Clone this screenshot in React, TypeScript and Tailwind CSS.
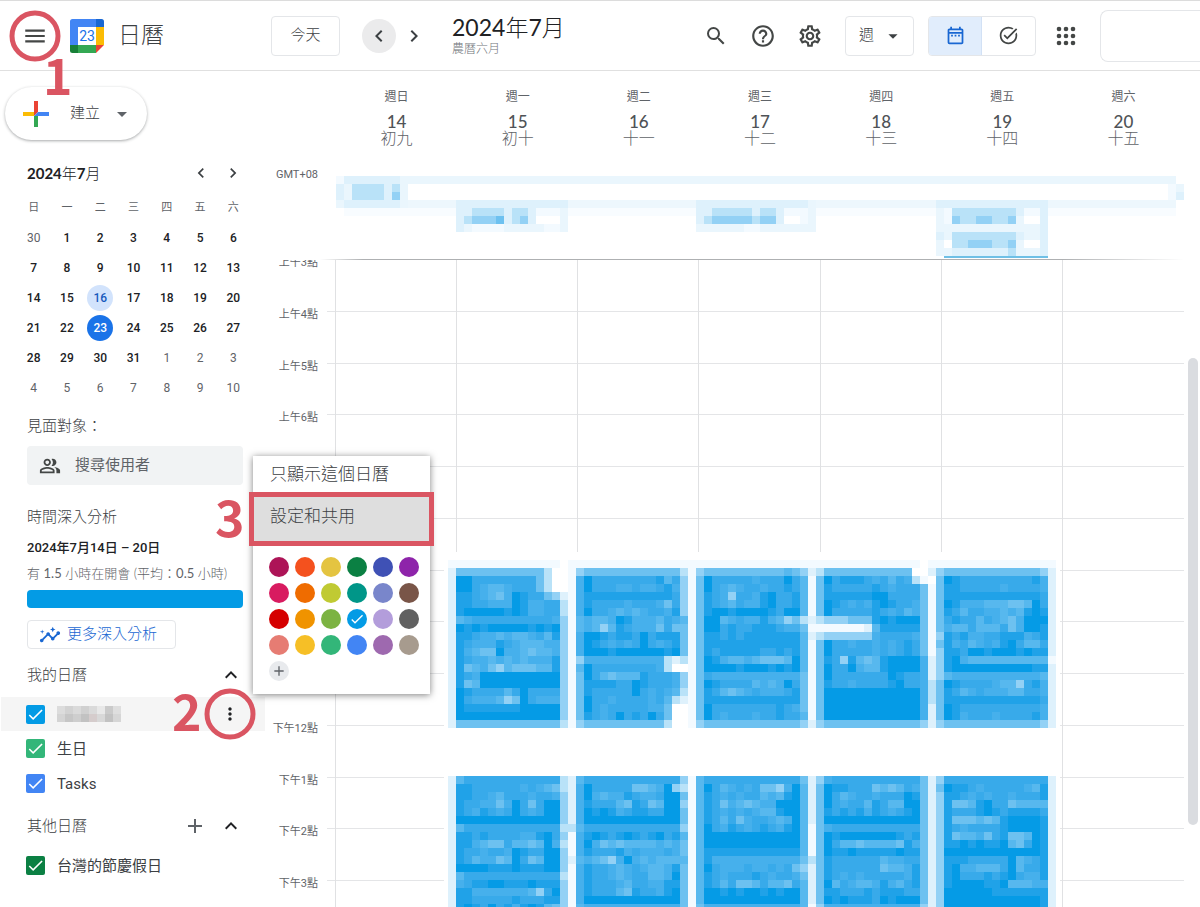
import type { ReactNode } from "react";
import {
  MdAdd,
  MdArrowDropDown,
  MdCheck,
  MdChevronLeft,
  MdChevronRight,
  MdHelpOutline,
  MdInsights,
  MdKeyboardArrowUp,
  MdMenu,
  MdMoreVert,
  MdOutlineDateRange,
  MdOutlinePeopleAlt,
  MdOutlineSettings,
  MdSearch,
  MdTaskAlt,
} from "react-icons/md";

const LATO = "font-['Lato','Noto_Sans_CJK_TC',sans-serif]";

/* Colour ramp used by the pixelated event blocks, from faint to solid. */
const RAMP: Record<string, string> = {
  a: "#f3faff",
  k: "#eaf6fd",
  b: "#def1fc",
  c: "#b9e2f8",
  d: "#93d1f5",
  e: "#6dc1f0",
  f: "#57b8ee",
  g: "#46b0ec",
  h: "#38aaea",
  i: "#20a2e8",
  j: "#059be6",
};

const MORNING: string[][] = [
  [
    "aaaaaaaaaaaaaa.", "beeeeeeeeeeec..", "bjjhhhhhhhhec..", "bjjhgffghhhec..", "biihgfegjihhedb",
    "biihhgggjigghhc", "bijjjjjijigghhc", "bfghhhhhhhhhhgd", "bjijijjjjjijijd", "biihggfgffghfid",
    "bihgggihgfffggd", "bigfeejggfeffgd", "bihggfgfgfgggid", "biefgedfeeeffid", "bihgjjjjjjjjjjd",
    "biefjjjjjjjjjjd", "bjihhhhfhjhhhhd", "bjhgggfdejhgggd", "bjiiiiiiijjjjjd", "bjjjjjjjjjjjjjd",
    "beeeeeeeeeeeeec",
  ],
  [
    "aaaaaaaaaaaaaaa", "adeeeeeeeeeeeec", "agjhhhhhhhhifhd", "agjhhhgghgghigd", "agiiiiiiiiiiihd",
    "agihhhhghhhgehd", "agjhhgfgfghhgid", "afgffgjigggfhgf", "afgfdfihgggehee", "agjjihiihjhiiie",
    "agjihghghjhghie", "agjjjijjjjjjije", "adggggggggggcbc", "afjhhhhhhhhgc..", "aejhfefffihhhgd",
    "aeiiiihhjihhhgd", "aeihhhhhjhghgfc", "aejhhghhhhghfcb", "aejhghhhhhgge..", "aeihghjhihjhe..",
    "adeeeeeeeeeec..",
  ],
  [
    "aaaaaaaaaaaaaaa", "adeeeeeeeeeefed", "aejhhhhhghhhjhf", "aejhgfghhghhihf", "aeihgdhhgijhhif",
    "aeihgfhggijhhif", "aeijjijjjjihjjf", "aejjfghggigfdec", "aejjhihhiiihgge", "aeiihihiiiiiiif",
    "aeiiiiiiiiiiiif", "aeihiiiiihhihif", "aejigffgfeeefjf", "aejjjjijjjijijf", "aehggggggggggge",
    "aejihhhhfgfgjhe", "aeihfefghggghie", "aeiiiiiiiiiiiie", "aejhhhhhhhhihge", "aejhghhhghhihhf",
    "adeeeeeeeeeeeed",
  ],
  [
    "aaaaaaaaaaaaaa.", "bceeeeeeeeeee..", "aejhiiihghfhgca", "aeihhhhhihghhhe", "aeiiiiiijjhhhhe",
    "aejihghgijihhge", "aejhhhhhihghfge", "bcdddeeeijijjje", "aaaaaaabfiiiiie", "bcddddddghhhhge",
    "aejhhghhghghihe", "aejhhhhhghghihe", "aeihdifefijjjjg", "aejhhjgffijjjjg", "aejhhhhhhhjihhg",
    "aeihhghhhhijhhg", "aejjjjjjjjjjjjg", "aejjjjjjjjjjjjg", "aejjjjjjjjjjjjg", "aejjjjjjjjjjjjg",
    "bdeeeeeeeeeeeed",
  ],
  [
    "aaaaaaaaaaaaaaaa", "bdeeeeeeeeeeeedb", ".ejihhhhhhhhhigb", "aeiihhhhhghhhhgb", "aeiiiiiiiiiiiihb",
    "aejigggfffeefjhb", "aeihfhhggfgfijib", "aehihhfhgfegjjjb", "aegffhfffhegjjib", "adihigghhiiighib",
    "aeighfghgijhffhb", "adiihjjijjjijiib", "bdijgffffffffffa", "bdijjjjjjjjjjiib", "bdfgggggggggggfb",
    "cejihhhhgffdhigb", "ceihfghgggffhhgb", "ceiiiiiiiiiiiihb", "bejihhhhhhhhhhgb", "bejighhhghhhhigb",
    "bdeeeeeeeeeeeedb",
  ],
];

const AFTERNOON: string[][] = [
  [
    "bfhhhhhhhhhhhhc", "biihhhhhhghgfec", "biihhgfhhhghhgd", "bihhggegjhehjjd", "bihgihghjhghjjd",
    "bjjjjjjjjjjjjjd", "bfhhhhhhhhhhhhc", "biihihhhhggijhd", "biigfeehffefjgc", "bihhghhgjihhjjd",
    "bihfggefjhefjjd", "bjjjjiiijiiijjd", "bfhhhhhhhhhhhhc", "bghiijjiiijiiid", "biigggggggfdhjd",
    "biihhhhhihhhiid", "bijihjhigijifed",
  ],
  [
    "bfhhhhhhhhhhhhd", "bgjhhhhheefgjdc", "bgjgfggihgghjje", "bgihhhfeihefjjd", "bgjijighiihhjje",
    "bgjjjjjjjjjjjje", "cfhhhhhhhhhhhhd", "agijihijihijhif", "agjgefeffffgfge", "agihhhighggghge",
    "bfgfedgjgfgffff", "agihhgfghgffgie", "agihhgfghhffgje", "agihhhgfhhggiie", "agihhhfeihhgije",
    "agjjjjjjjjjjjje", "afgggggggggggge",
  ],
  [
    "afhhhhhhhhhhhhe", "afjhfghgheedgjf", "afihghghhfgfijf", "afihegfefggjjjf", "afihghghgffijjf",
    "afihfheghhgfgjf", "afjhgihghihgijf", "afjjjjjjjjjjjjf", "afjjjjjjjjjjjjf", "afiiiiiiiiiiiif",
    "afiggggggggggge", "afjhggghgghghed", "afihghhhihghhge", "afihfheefhffehf", "afjjijijjijijjf",
    "afjjjjjjjjjjjjf", "aeggggggggggggf",
  ],
  [
    "bdghhhhhhhhhhhe", "bejiihhhefefhge", "bejhfghhghhhjie", "bejhghhfihffjje", "beihihigihghije",
    "bejjjjjjjjjjjje", "aeghhhhhhhhhhhe", "aejijjjjjjjihie", "aejhffeffffeige", "aejiijiiiiijiie",
    "ceihhhhhhfgghhe", "beihhhhhheffgie", "beihghghhhhhgie", "bejfhgffgigfhie", "beiihhhihiiihhe",
    "bejijiiihjijjje", "adggggggggggggd",
  ],
  [
    "bdhhhhhhhhhhhhhb", "bejiihghhhhhgfib", "bdiihghghhghhhib", "bdieefijhheffffb", "bdihhhijihiiiihb",
    "bdieeefefijjjjib", "bdihghhhhijjjjib", "bdieffgehieefjib", "bdiijijiijfehjib", "bdjjjjjjjjjjjjib",
    "bdiiihhhhhjfghib", "bdijggfffhjfhhib", "bdijhhhihijhggib", "bdijjjjiijfffggb", "bdjjjjjjiiiiiiib",
    "bdjjjjjjjjjjjjib", "bdjjjjjjjjjjjjib",
  ],
];

function Pixels({ x, y, rows }: { x: number; y: number; rows: string[] }) {
  return (
    <g>
      {rows.flatMap((row, r) =>
        row.split("").map((cell, c) =>
          cell === "." ? null : (
            <rect key={`${r}-${c}`} x={x + c} y={y + r} width="1" height="1" fill={RAMP[cell]} />
          ),
        ),
      )}
    </g>
  );
}

function AllDayEvents() {
  return (
    <svg
      className="h-[82px] w-full"
      viewBox="0 0 106 10.25"
      preserveAspectRatio="none"
      shapeRendering="crispEdges"
      role="img"
      aria-label="全天活動"
    >
      <rect x="1" y="0" width="104" height="1" fill="#eaf6fd" />
      <rect x="1" y="3" width="104" height="1" fill="#edf7fd" />
      <rect x="1" y="4" width="104" height="1" fill="#f8fcff" />
      <Pixels x={0} y={0} rows={["abbbbbbb", "bkccccbck", "bkccccbdk", "kbbbbbbbk"]} />
      <Pixels x={104} y={1} rows={["ak", "ab"]} />
      <Pixels x={15} y={3} rows={["bbbbbbbbbbbbbb", "bbccccbccbaaak", "bcdddebcdb...k", "bkaaaakkkkkaak"]} />
      <Pixels x={45} y={3} rows={["bbbbbbbbbbbbbbk", "bbcccccbccbaaak", "bcdddddcddb..ak", "kkkkkkaakkkkkkk"]} />
      <Pixels
        x={75}
        y={3}
        rows={[
          "bbbbbbbbbbbbbb",
          "kaccccccccbaab",
          "kadccddccdk..b",
          "kkkkkkkkkkkkkb",
          "bkccccccccbkkb",
          "k.ccdddccdk..b",
          "kkbbbbbbbckkkb",
        ]}
      />
      <rect x="76" y="10" width="13" height="0.2" fill="#6fc0e6" />
    </svg>
  );
}

function TimedEvents() {
  return (
    <svg
      className="absolute top-[292px] left-0 h-[360px] w-full"
      viewBox="0 0 106 45"
      preserveAspectRatio="none"
      shapeRendering="crispEdges"
      role="img"
      aria-label="活動"
    >
      <rect x="13.5" y="0" width="77" height="45" fill="#ffffff" />
      {MORNING.map((rows, d) => (
        <Pixels key={d} x={14 + d * 15} y={1} rows={rows} />
      ))}
      {AFTERNOON.map((rows, d) => (
        <Pixels key={d} x={14 + d * 15} y={28} rows={rows} />
      ))}
    </svg>
  );
}

function Logo() {
  return (
    <svg width="34" height="34" viewBox="0 0 34 34" aria-hidden="true">
      <path d="M2.5 0H26v8H8v18H0V2.5A2.5 2.5 0 0 1 2.5 0Z" fill="#4285f4" />
      <path d="M26 0h5.500A2.500 2.500 0 0 1 34 2.500V8h-8Z" fill="#1967d2" />
      <path d="M26 8h8v18h-8Z" fill="#fbbc04" />
      <path d="M8 26h18v8H8Z" fill="#34a853" />
      <path d="M0 26h8v8H2.500A2.500 2.500 0 0 1 0 31.500Z" fill="#188038" />
      <path d="M26 26h8l-8 8Z" fill="#ea4335" />
      <path d="M8 8h18v18H8Z" fill="#ffffff" />
      <text x="17" y="22" textAnchor="middle" fontSize="14" fill="#1a73e8" fontFamily="Roboto, sans-serif">
        23
      </text>
    </svg>
  );
}

function AppsIcon() {
  return (
    <svg width="20" height="20" viewBox="0 0 20 20" fill="currentColor" aria-hidden="true">
      {[3, 10, 17].flatMap((y) => [3, 10, 17].map((x) => <circle key={`${x}-${y}`} cx={x} cy={y} r="2.3" />))}
    </svg>
  );
}

function Ring() {
  return (
    <span className="pointer-events-none absolute top-1/2 left-1/2 size-[51px] -translate-1/2 rounded-full border-5 border-[#da5562]" />
  );
}

function Step({ n, className }: { n: number; className: string }) {
  return (
    <span
      className={`pointer-events-none absolute z-20 font-['Noto_Sans_CJK_TC',sans-serif] text-[50px] leading-[50px] font-bold text-[#da5562] ${className}`}
    >
      {n}
    </span>
  );
}

function IconButton({ label, children }: { label: string; children: ReactNode }) {
  return (
    <button type="button" aria-label={label} className="flex size-10 items-center justify-center text-2xl text-[#444746]">
      {children}
    </button>
  );
}

function Header() {
  return (
    <header className="flex h-[71px] shrink-0 items-center border-t border-b border-t-[#dcdcdc] border-b-[#e0e0e0]">
      <div className="flex w-[271px] shrink-0 items-center pl-[11px]">
        <div className="relative">
          <button type="button" aria-label="主選單" className="flex size-12 items-center justify-center text-[26px] text-[#444746]">
            <MdMenu />
          </button>
          <Ring />
          <Step n={1} className="top-9 left-8" />
        </div>
        <span className="ml-[11px]">
          <Logo />
        </span>
        <span className="ml-[14px] text-[23px] leading-8 font-light text-[#3c4043]">日曆</span>
      </div>
      <button type="button" className="h-10 w-[69px] shrink-0 rounded border border-[#e4e6e9] text-[15px] font-light text-[#3c4043]">
        今天
      </button>
      <button
        type="button"
        aria-label="上一週"
        className="ml-[22px] flex size-[34px] shrink-0 items-center justify-center rounded-full bg-[#ebebec] text-[24px] text-[#3c4043]"
      >
        <MdChevronLeft />
      </button>
      <button type="button" aria-label="下一週" className="flex size-9 shrink-0 items-center justify-center text-[24px] text-[#3c4043]">
        <MdChevronRight />
      </button>
      <div className="ml-5 shrink-0">
        <h1 className={`${LATO} text-[23px] leading-[26px] font-light text-[#202124]`}>
          <span className="font-normal">2024</span>年<span className="font-normal">7</span>月
        </h1>
        <p className="text-xs leading-[18px] font-light text-[#70757a]">農曆六月</p>
      </div>
      <div className="ml-auto flex shrink-0 items-center">
        <div className="mr-[15px] flex items-center gap-[7px]">
          <IconButton label="搜尋">
            <MdSearch />
          </IconButton>
          <IconButton label="說明">
            <MdHelpOutline className="text-[26px]" />
          </IconButton>
          <IconButton label="設定">
            <MdOutlineSettings className="text-[26px]" />
          </IconButton>
        </div>
        <button
          type="button"
          className="flex h-10 w-[69px] items-center justify-center gap-2 rounded border border-[#e4e6e9] pl-1 text-[15px] font-light text-[#3c4043]"
        >
          週
          <MdArrowDropDown className="text-[22px]" />
        </button>
        <div className="ml-[14px] flex h-10 overflow-hidden rounded border border-[#e4e6e9]">
          <button type="button" aria-label="日曆檢視" className="flex w-[53px] items-center justify-center border-r border-[#d2e1f5] bg-[#e1edfc] text-[21px] text-[#1967d2]">
            <MdOutlineDateRange />
          </button>
          <button type="button" aria-label="工作檢視" className="flex w-[53px] items-center justify-center text-[21px] text-[#444746]">
            <MdTaskAlt />
          </button>
        </div>
        <div className="ml-[10px]">
          <IconButton label="應用程式">
            <AppsIcon />
          </IconButton>
        </div>
        <div className="ml-[14px] h-[52px] w-[100px] rounded-l-lg border border-r-0 border-[#e4e6e9]" />
      </div>
    </header>
  );
}

const WEEKDAYS = ["日", "一", "二", "三", "四", "五", "六"];
const MONTH = [
  [30, 1, 2, 3, 4, 5, 6],
  [7, 8, 9, 10, 11, 12, 13],
  [14, 15, 16, 17, 18, 19, 20],
  [21, 22, 23, 24, 25, 26, 27],
  [28, 29, 30, 31, 1, 2, 3],
  [4, 5, 6, 7, 8, 9, 10],
];

function dayClass(week: number, day: number) {
  const outside = (week === 0 && day === 30) || (week > 3 && day < 11);
  if (outside) return "text-[#5f6368]";
  if (week === 2 && day === 16) return "bg-[#d2e3fc] text-[#185abc] font-medium";
  if (week === 3 && day === 23) return "bg-[#1a73e8] text-white font-medium";
  return "text-[#202124] font-medium";
}

function MiniCalendar() {
  return (
    <section className="mt-5">
      <div className="flex h-[26px] items-center pr-4 pl-[27px] text-[#3c4043]">
        <h2 className={`${LATO} flex-1 text-[15px] leading-5 font-light text-[#202124]`}>
          <span className="font-bold">2024</span>年<span className="font-bold">7</span>月
        </h2>
        <button type="button" aria-label="上個月" className="flex w-8 justify-center text-xl">
          <MdChevronLeft />
        </button>
        <button type="button" aria-label="下個月" className="flex w-8 justify-center text-xl">
          <MdChevronRight />
        </button>
      </div>
      <table className="mt-[7px] ml-[17px] w-[233px] table-fixed text-center text-xs leading-4">
        <thead>
          <tr className="h-[30px] text-[11px] text-[#5f6368]">
            {WEEKDAYS.map((d) => (
              <th key={d} scope="col" className="p-0 font-normal">
                {d}
              </th>
            ))}
          </tr>
        </thead>
        <tbody>
          {MONTH.map((week, w) => (
            <tr key={w} className="h-[30px]">
              {week.map((day) => (
                <td key={day} className="p-0">
                  <button type="button" className={`size-[26px] rounded-full ${dayClass(w, day)}`}>
                    {day}
                  </button>
                </td>
              ))}
            </tr>
          ))}
        </tbody>
      </table>
    </section>
  );
}

function CalendarCheck({ id, color, children }: { id: string; color: string; children: ReactNode }) {
  return (
    <label htmlFor={id} className="flex flex-1 items-center gap-3 text-[15px] leading-6 text-[#3c4043]">
      <span className="grid size-[19px] place-items-center">
        <input
          id={id}
          type="checkbox"
          defaultChecked
          className={`col-start-1 row-start-1 size-[19px] appearance-none rounded-xs ${color}`}
        />
        <MdCheck className="pointer-events-none col-start-1 row-start-1 text-[19px] text-white" />
      </span>
      {children}
    </label>
  );
}

const NAME_TINTS = [
  ["bg-[#dcdcdc]", "bg-[#d4d4d4]"],
  ["bg-[#d2d2d2]", "bg-[#c6c6c6]"],
  ["bg-[#dadada]", "bg-[#cecece]"],
  ["bg-[#d0d0d0]", "bg-[#c2c2c2]"],
  ["bg-[#dadada]", "bg-[#d5cccc]"],
  ["bg-[#e8e8e8]", "bg-[#d8d8d8]"],
  ["bg-[#cacaca]", "bg-[#c2c2c2]"],
  ["bg-[#dedede]", "bg-[#d6d6d6]"],
];

function Sidebar() {
  return (
    <aside className="w-[265px] shrink-0 pt-4">
      <button
        type="button"
        className="ml-[5px] flex h-[53px] w-[142px] items-center rounded-full pl-4 text-[15px] font-light text-[#3c4043] shadow-[0_1px_3px_rgba(60,64,67,0.45)]"
      >
        <svg width="30" height="30" viewBox="0 0 30 30" aria-hidden="true">
          <path d="M13 2h4v11l-4 4Z" fill="#ea4335" />
          <path d="M17 13h11v4H17Z" fill="#4285f4" />
          <path d="M13 17h4v11h-4Z" fill="#34a853" />
          <path d="M2 13h11v4H2Z" fill="#fbbc04" />
          <path d="M17 13v4h-4Z" fill="#4285f4" />
        </svg>
        <span className="ml-[19px]">建立</span>
        <MdArrowDropDown className="ml-[10px] text-[24px] text-[#5f6368]" />
      </button>

      <MiniCalendar />

      <div className="pr-[22px] pl-[27px]">
        <h3 className="mt-[11px] text-[15px] leading-6 font-light text-[#3c4043]">見面對象：</h3>
        <div className="mt-2 flex h-[39px] items-center gap-[14px] rounded bg-[#f1f3f4] pl-3 text-[#444746]">
          <MdOutlinePeopleAlt className="shrink-0 text-[22px]" />
          <input
            type="text"
            aria-label="搜尋使用者"
            placeholder="搜尋使用者"
            className="w-full min-w-0 bg-transparent text-[15px] outline-none placeholder:text-[#5f6368]"
          />
        </div>

        <h3 className="mt-5 text-[15px] leading-6 font-light text-[#3c4043]">時間深入分析</h3>
        <p className="mt-[9px] text-[13px] leading-5 font-medium text-[#202124]">2024年7月14日 – 20日</p>
        <p className={`${LATO} mt-[5px] text-[13px] leading-5 font-light whitespace-nowrap text-[#5f6368]`}>
          有 <span className="font-normal">1.5</span> 小時在開會 (平均：<span className="font-normal">0.5</span> 小時)
        </p>
        <div className="mt-[7px] h-[18px] rounded bg-[#039be5]" />
        <button
          type="button"
          className="mt-3 flex h-[29px] w-[149px] items-center gap-[6px] rounded border border-[#e4e6e9] pl-[11px] text-[15px] font-light text-[#1967d2]"
        >
          <MdInsights className="text-[22px]" />
          更多深入分析
        </button>
      </div>

      <section>
        <div className="mt-[14px] flex h-6 items-center pr-[22px] pl-[27px]">
          <h3 className="flex-1 text-[15px] leading-6 font-light text-[#3c4043]">我的日曆</h3>
          <button type="button" aria-label="收合我的日曆" className="text-2xl text-[#202124]">
            <MdKeyboardArrowUp />
          </button>
        </div>
        <div className="mt-[10px] ml-px flex h-[34px] items-center bg-[#f5f5f5] pl-[25px]">
          <CalendarCheck id="cal-own" color="bg-[#039be5]">
            <span className="flex" role="img" aria-label="日曆名稱">
              {NAME_TINTS.map(([top, bottom], i) => (
                <span key={i} className="flex w-2 flex-col">
                  <span className={`h-2 ${top}`} />
                  <span className={`h-2 ${bottom}`} />
                </span>
              ))}
            </span>
          </CalendarCheck>
          <div className="relative mr-[19px]">
            <button type="button" aria-label="日曆選項" className="flex size-8 items-center justify-center text-xl text-[#202124]">
              <MdMoreVert />
            </button>
            <Ring />
            <Step n={2} className="-top-[14px] -left-[42px]" />
          </div>
        </div>
        <div className="flex h-[35px] items-center pl-[26px]">
          <CalendarCheck id="cal-birthday" color="bg-[#33b679]">
            生日
          </CalendarCheck>
        </div>
        <div className="flex h-[35px] items-center pl-[26px]">
          <CalendarCheck id="cal-tasks" color="bg-[#4285f4]">
            Tasks
          </CalendarCheck>
        </div>
      </section>

      <section>
        <div className="mt-[13px] flex h-6 items-center gap-3 pr-[22px] pl-[27px]">
          <h3 className="flex-1 text-[15px] leading-6 font-light text-[#3c4043]">其他日曆</h3>
          <button type="button" aria-label="新增其他日曆" className="text-2xl text-[#5f6368]">
            <MdAdd />
          </button>
          <button type="button" aria-label="收合其他日曆" className="text-2xl text-[#202124]">
            <MdKeyboardArrowUp />
          </button>
        </div>
        <div className="mt-[10px] flex h-[35px] items-center pl-[26px]">
          <CalendarCheck id="cal-holidays" color="bg-[#0b8043]">
            台灣的節慶假日
          </CalendarCheck>
        </div>
      </section>
    </aside>
  );
}

const DAYS = [
  ["週日", "14", "初九"],
  ["週一", "15", "初十"],
  ["週二", "16", "十一"],
  ["週三", "17", "十二"],
  ["週四", "18", "十三"],
  ["週五", "19", "十四"],
  ["週六", "20", "十五"],
];

/* Hours that sit behind the open menu carry no label. */
const HOURS = [
  "上午3點", "上午4點", "上午5點", "上午6點", "", "", "", "", "", "下午12點", "下午1點", "下午2點", "下午3點",
];

function Week() {
  return (
    <main className="flex min-w-0 flex-1 flex-col pr-4">
      <div className="flex h-[188px] shrink-0">
        <div className="w-[71px] shrink-0 pt-24 pr-[18px] text-right text-[11px] leading-4 text-[#5f6368]">GMT+08</div>
        <div className="min-w-0 flex-1">
          <div className="grid h-[105px] grid-cols-7 pt-4 text-center">
            {DAYS.map(([name, num, lunar]) => (
              <div key={num}>
                <div className="text-xs leading-5 text-[#5f6368]">{name}</div>
                <div className={`${LATO} mt-[5px] text-[17px] leading-5 font-medium text-[#4f5357]`}>{num}</div>
                <div className="text-base leading-[14px] font-light text-[#5f6368]">{lunar}</div>
              </div>
            ))}
          </div>
          <AllDayEvents />
        </div>
      </div>
      <div className="ml-[55px] h-px shrink-0 bg-[linear-gradient(to_right,transparent,#aeb0b2_5%,#aeb0b2_86%,transparent)]" />
      <div className="grid min-h-0 flex-1 overflow-hidden">
        <div className="col-start-1 row-start-1 grid h-[673px] grid-rows-13">
          {HOURS.map((hour, i) => (
            <div key={i} className="flex">
              <div className="-mt-[5px] w-[53px] shrink-0 text-right text-[11px] leading-4 whitespace-nowrap text-[#5f6368]">{hour}</div>
              <div className="ml-[9px] flex-1 border-b border-[#e4e5e7]" />
            </div>
          ))}
        </div>
        <div className="relative col-start-1 row-start-1 ml-[70px] h-[673px] border-l border-[#e0e1e3]">
          <div className="grid h-full grid-cols-7">
            {DAYS.map(([, num]) => (
              <div key={num} className="border-r border-[#e0e1e3] last:border-r-0" />
            ))}
          </div>
          <TimedEvents />
        </div>
      </div>
    </main>
  );
}

const SWATCHES = [
  "bg-[#ad1457]", "bg-[#f4511e]", "bg-[#e4c441]", "bg-[#0b8043]", "bg-[#3f51b5]", "bg-[#8e24aa]",
  "bg-[#d81b60]", "bg-[#ef6c00]", "bg-[#c0ca33]", "bg-[#009688]", "bg-[#7986cb]", "bg-[#795548]",
  "bg-[#d50000]", "bg-[#f09300]", "bg-[#7cb342]", "bg-[#039be5]", "bg-[#b39ddb]", "bg-[#616161]",
  "bg-[#e67c73]", "bg-[#f6bf26]", "bg-[#33b679]", "bg-[#4285f4]", "bg-[#9e69af]", "bg-[#a79b8e]",
];

function CalendarMenu() {
  return (
    <div className="absolute top-[456px] left-[253px] z-10 h-[238px] w-[177px] bg-white text-[17px] font-light text-[#3c4043] shadow-[0_1px_7px_rgba(0,0,0,0.5)]">
      <button type="button" className="block h-[37px] w-full pl-[17px] text-left">
        只顯示這個日曆
      </button>
      <div className="relative">
        <button type="button" className="block h-[52px] w-full bg-[#dedede] pb-1 pl-[17px] text-left">
          設定和共用
        </button>
        <span className="pointer-events-none absolute -inset-x-1 -inset-y-px border-5 border-[#da5562]" />
        <Step n={3} className="-top-[3px] -left-[38px]" />
      </div>
      <div className="mt-3 grid w-fit grid-cols-6 gap-[6px] pl-4">
        {SWATCHES.map((color) => (
          <button
            key={color}
            type="button"
            aria-label="日曆顏色"
            className={`flex size-5 items-center justify-center rounded-full text-base text-white ${color}`}
          >
            {color === "bg-[#039be5]" && <MdCheck />}
          </button>
        ))}
        <button type="button" aria-label="新增自訂顏色" className="flex size-5 items-center justify-center rounded-full bg-[#e8eaed] text-base text-[#5f6368]">
          <MdAdd />
        </button>
      </div>
    </div>
  );
}

export default function App() {
  return (
    <div className="relative flex h-screen flex-col overflow-hidden bg-white font-['Roboto','Noto_Sans_CJK_TC',sans-serif]">
      <Header />
      <div className="flex min-h-0 flex-1">
        <Sidebar />
        <Week />
      </div>
      <CalendarMenu />
      <div className="absolute top-[358px] right-[2px] h-[467px] w-[10px] rounded-full bg-[#dadce0]" />
    </div>
  );
}
